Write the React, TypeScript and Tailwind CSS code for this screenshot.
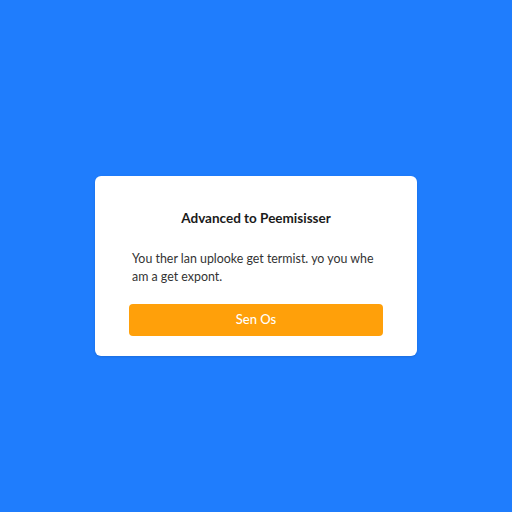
export default function App() {
  return (
    <div
      className="w-[512px] h-[512px] bg-[#1f7dfd] flex items-center justify-center"
      style={{ fontFamily: 'Lato, "Liberation Sans", sans-serif' }}
    >
      <div className="w-[322px] h-[180px] mt-[20px] bg-white rounded-[6px] shadow-sm flex flex-col px-[34px] pt-[32px]">
        <h2 className="text-center text-[13.5px] font-bold text-[#1a1a1a] leading-[20px]">
          Advanced to Peemisisser
        </h2>
        <p className="mt-[22px] ml-[3px] text-[12.4px] leading-[18px] text-[#333] whitespace-nowrap">
          You ther lan uplooke get termist. yo you whe
          <br />
          am a get expont.
        </p>
        <button className="mt-[18px] h-[32px] w-full rounded-[4px] bg-[#ffa00a] text-white text-[13px] font-medium">
          Sen Os
        </button>
      </div>
    </div>
  )
}
